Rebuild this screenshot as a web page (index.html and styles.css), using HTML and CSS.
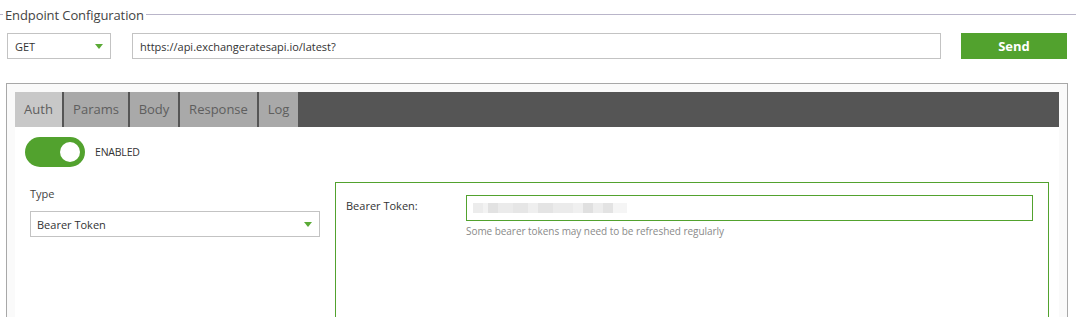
FILE: index.html
```html
<!DOCTYPE html>
<html>
<head>
<meta charset="utf-8">
<link rel="stylesheet" href="styles.css">
</head>
<body>
<div class="legend"><span class="legend-text">Endpoint Configuration</span></div>
<div class="endpoint">
  <div class="select method"><span>GET</span><span class="caret"></span></div>
  <div class="input url">https://api.exchangeratesapi.io/latest?</div>
  <button class="send">Send</button>
</div>
<div class="panel">
  <div class="tabs">
    <div class="tab active t-auth">Auth</div>
    <div class="tab t-params">Params</div>
    <div class="tab t-body">Body</div>
    <div class="tab t-response">Response</div>
    <div class="tab t-log">Log</div>
  </div>
  <div class="content">
    <div class="toggle-row">
      <div class="toggle"><span class="knob"></span></div>
      <span class="toggle-label">ENABLED</span>
    </div>
    <div class="auth">
      <div class="type-col">
        <div class="type-label">Type</div>
        <div class="select type"><span>Bearer Token</span><span class="caret"></span></div>
      </div>
      <div class="token-box">
        <div class="token-label">Bearer Token:</div>
        <div class="token-field">
          <div class="input token"><span class="blur"></span></div>
          <div class="hint">Some bearer tokens may need to be refreshed regularly</div>
        </div>
      </div>
    </div>
  </div>
</div>
</body>
</html>
```
FILE: styles.css
```css
* { box-sizing: border-box; }
html, body { margin: 0; padding: 0; background: #fff; }
body {
  font-family: "Open Sans", "Noto Sans", sans-serif;
  color: #333;
  width: 1076px;
  height: 317px;
  overflow: hidden;
}
.legend {
  display: flex;
  align-items: center;
  height: 28px;
  padding-top: 1px;
}
.legend::before {
  content: "";
  width: 3px;
  border-top: 1px solid #b9b5c9;
}
.legend::after {
  content: "";
  flex: 1;
  border-top: 1px solid #b9b5c9;
}
.legend-text {
  font-size: 13px;
  color: #444;
  padding: 0 2px;
  letter-spacing: -0.1px;
}
.endpoint {
  display: flex;
  align-items: center;
  margin-top: 5px;
  padding-left: 7px;
  height: 26px;
}
.select, .input {
  height: 26px;
  border: 1px solid #c3c3c3;
  background: #fff;
  display: flex;
  align-items: center;
  font-size: 11px;
  color: #333;
}
.select {
  justify-content: space-between;
  padding: 0 7px 0 7px;
}
.caret {
  width: 0;
  height: 0;
  border-left: 4.5px solid transparent;
  border-right: 4.5px solid transparent;
  border-top: 5px solid #5aaa36;
}
.method { width: 104px; }
.url {
  width: 809px;
  margin-left: 21px;
  padding-left: 7px;
}
.send {
  margin-left: 20px;
  width: 106px;
  height: 26px;
  background: #52a22e;
  border: 0;
  color: #fff;
  font-family: "Open Sans", sans-serif;
  font-weight: 700;
  font-size: 13px;
  padding: 0;
}
.panel {
  margin: 24px 0 0 6px;
  width: 1062px;
  height: 234px;
  border: 1px solid #a8a8a8;
  border-bottom: 0;
  background: #fafafa;
  padding: 8px 8px 0 8px;
}
.tabs {
  display: flex;
  height: 35px;
  background: #555;
}
.tab {
  display: flex;
  align-items: center;
  justify-content: center;
  padding-bottom: 2px;
  background: #a9a9a9;
  color: #5e5e5e;
  font-size: 13px;
  margin-right: 2px;
}
.t-auth { width: 47px; }
.t-params { width: 64px; }
.t-body { width: 48px; }
.t-response { width: 77px; }
.t-log { width: 39px; }
.tab.active { background: #c8c8c8; }
.content {
  background: #fff;
  height: 191px;
  padding: 10px 0 0 10px;
}
.toggle-row {
  display: flex;
  align-items: center;
  height: 30px;
}
.toggle {
  width: 60px;
  height: 30px;
  border-radius: 15px;
  background: #52a22e;
  position: relative;
}
.knob {
  position: absolute;
  right: 5px;
  top: 5px;
  width: 20px;
  height: 20px;
  border-radius: 50%;
  background: #fff;
}
.toggle-label {
  margin-left: 10px;
  font-size: 10.5px;
  color: #333;
  letter-spacing: -0.2px;
}
.auth {
  display: flex;
  margin-top: 15px;
  padding-left: 5px;
}
.type-col {
  width: 290px;
  padding-top: 5px;
}
.type-label {
  font-size: 11px;
  color: #444;
  height: 18px;
  line-height: 14px;
}
.select.type {
  margin-top: 6px;
  width: 290px;
  padding-left: 6px;
}
.token-box {
  margin-left: 15px;
  width: 714px;
  height: 135px;
  border: 1px solid #52a22e;
  border-bottom: 0;
  display: flex;
  padding: 12px 15px 0 10px;
}
.token-label {
  width: 120px;
  font-size: 11px;
  color: #333;
  height: 26px;
  line-height: 22px;
}
.token-field { flex: 1; }
.input.token {
  height: 26px;
  border: 1px solid #52a22e;
  padding-left: 6px;
}
.blur {
  display: block;
  width: 154px;
  height: 10px;
  background: linear-gradient(90deg,
    #ececec 0 10px, #f3f3f3 10px 15px, #e2e2e2 15px 25px, #ebebeb 25px 40px,
    #e6e6e6 40px 55px, #efefef 55px 65px, #e4e4e4 65px 80px, #ebebeb 80px 100px,
    #f0f0f0 100px 110px, #e0e0e0 110px 120px, #ededed 120px 130px, #e3e3e3 130px 140px,
    #f5f5f5 140px 154px);
}
.hint {
  margin-top: 3px;
  font-size: 10px;
  color: #8a8a8a;
  letter-spacing: -0.05px;
}
```
